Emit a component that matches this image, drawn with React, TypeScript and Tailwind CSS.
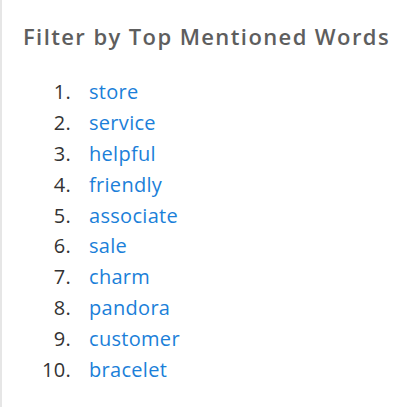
const WORDS = [
  "store",
  "service",
  "helpful",
  "friendly",
  "associate",
  "sale",
  "charm",
  "pandora",
  "customer",
  "bracelet",
];

export default function App() {
  return (
    <div
      className="h-[407px] w-[402px] border-l-2 border-[#e6e6e6] bg-white"
      style={{ fontFamily: "'Open Sans', sans-serif" }}
    >
      <div className="pl-[21px] pt-[20px]">
        <h2 className="text-[22px] font-semibold leading-[32px] tracking-[1.4px] text-[#5e5e5e]">
          Filter by Top Mentioned Words
        </h2>
        <ol className="mt-[25px] flex flex-col">
          {WORDS.map((w, i) => (
            <li
              key={w}
              className="flex h-[30.8px] items-center text-[20px] leading-[30px] tracking-[0.3px]"
            >
              <span className="w-[48px] text-right text-[#333333]">{i + 1}.</span>
              <a href="#" className="ml-[18px] text-[#1b7fd9]">
                {w}
              </a>
            </li>
          ))}
        </ol>
      </div>
    </div>
  );
}
